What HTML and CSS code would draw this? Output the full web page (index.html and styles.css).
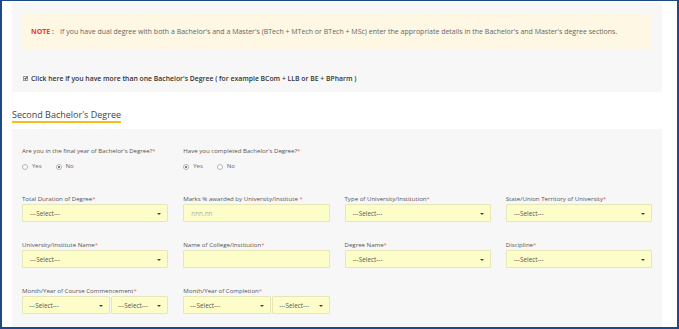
FILE: index.html
```html
<!DOCTYPE html>
<html lang="en">
<head>
    <meta charset="UTF-8">
    <title>Second Bachelor's Degree</title>
    <link rel="stylesheet" href="styles.css">
</head>
<body>
    <div class="frame">
        <div class="top-panel">
            <div class="note">
                <span class="note-tag">NOTE :</span>
                If you have dual degree with both a Bachelor's and a Master's (BTech + MTech or BTech + MSc) enter the appropriate details in the Bachelor's and Master's degree sections.
            </div>
            <label class="check-row">
                <span class="checkbox">&#10004;</span>
                Click here if you have more than one Bachelor's Degree ( for example BCom + LLB or BE + BPharm )
            </label>
        </div>

        <h2 class="section-title">Second Bachelor's Degree</h2>

        <div class="form-panel">
            <div class="form-grid radio-grid">
                <div class="field">
                    <div class="field-label">Are you in the final year of Bachelor's Degree?<span class="req">*</span></div>
                    <div class="radios">
                        <span class="radio"><span class="dot"></span>Yes</span>
                        <span class="radio"><span class="dot checked"></span>No</span>
                    </div>
                </div>
                <div class="field">
                    <div class="field-label">Have you completed Bachelor's Degree?<span class="req">*</span></div>
                    <div class="radios">
                        <span class="radio"><span class="dot checked"></span>Yes</span>
                        <span class="radio"><span class="dot"></span>No</span>
                    </div>
                </div>
            </div>

            <div class="form-grid">
                <div class="field">
                    <div class="field-label">Total Duration of Degree<span class="req">*</span></div>
                    <div class="select">---Select---</div>
                </div>
                <div class="field">
                    <div class="field-label">Marks % awarded by University/Institute <span class="req">*</span></div>
                    <div class="input placeholder">nnn.nn</div>
                </div>
                <div class="field">
                    <div class="field-label">Type of University/Institution<span class="req">*</span></div>
                    <div class="select">---Select---</div>
                </div>
                <div class="field">
                    <div class="field-label">State/Union Territory of University<span class="req">*</span></div>
                    <div class="select">---Select---</div>
                </div>

                <div class="field">
                    <div class="field-label">University/Institute Name<span class="req">*</span></div>
                    <div class="select">---Select---</div>
                </div>
                <div class="field">
                    <div class="field-label">Name of College/Institution<span class="req">*</span></div>
                    <div class="input"></div>
                </div>
                <div class="field">
                    <div class="field-label">Degree Name<span class="req">*</span></div>
                    <div class="select">---Select---</div>
                </div>
                <div class="field">
                    <div class="field-label">Discipline<span class="req">*</span></div>
                    <div class="select">---Select---</div>
                </div>

                <div class="field">
                    <div class="field-label">Month/Year of Course Commencement<span class="req">*</span></div>
                    <div class="split">
                        <div class="select">---Select---</div>
                        <div class="select">---Select---</div>
                    </div>
                </div>
                <div class="field">
                    <div class="field-label">Month/Year of Completion<span class="req">*</span></div>
                    <div class="split">
                        <div class="select">---Select---</div>
                        <div class="select">---Select---</div>
                    </div>
                </div>
            </div>
        </div>
    </div>
</body>
</html>
```

FILE: styles.css
```css
:root {
    --frame: #1d4a86;
    --panel: #f7f7f7;
    --note-bg: #fdf7e4;
    --field-bg: #fdfdc9;
    --field-border: #e6e6b8;
    --text: #555555;
    --req: #f26d4f;
    --accent: #f7bd1a;
}

* {
    margin: 0;
    padding: 0;
    box-sizing: border-box;
}

body {
    font-family: "Open Sans", "Noto Sans", sans-serif;
    background: #ffffff;
    color: var(--text);
}

.frame {
    width: 679px;
    height: 329px;
    border: 2px solid var(--frame);
    border-top-width: 1px;
    padding: 2px 15px 0 10px;
    overflow: hidden;
}

.top-panel {
    background: var(--panel);
    height: 89px;
    padding: 11px 10px 0;
}

.note {
    background: var(--note-bg);
    height: 35px;
    display: flex;
    align-items: center;
    padding-left: 9px;
    font-size: 7px;
    color: #666;
    white-space: nowrap;
}

.note-tag {
    color: #e8412c;
    font-weight: 700;
    margin-right: 6px;
}

.check-row {
    display: flex;
    align-items: center;
    gap: 3px;
    margin-top: 25px;
    padding-left: 1px;
    font-size: 6.85px;
    font-weight: 600;
    color: #333;
    white-space: nowrap;
}

.checkbox {
    width: 5px;
    height: 5px;
    border: 1px solid #999;
    background: #fff;
    font-size: 5px;
    line-height: 3px;
    color: #333;
    text-align: center;
}

.section-title {
    display: inline-block;
    margin-top: 17px;
    font-size: 9px;
    font-weight: 400;
    line-height: 12px;
    color: #444;
    border-bottom: 2px solid var(--accent);
}

.form-panel {
    background: var(--panel);
    margin-top: 6px;
    height: 210px;
    padding: 17px 10px 0;
}

.form-grid {
    display: grid;
    grid-template-columns: repeat(4, 1fr);
    column-gap: 15px;
    row-gap: 18px;
}

.radio-grid {
    margin-bottom: 23px;
}

.field-label {
    font-size: 6.1px;
    line-height: 9px;
    color: #555;
    white-space: nowrap;
    margin-bottom: 1px;
}

.req {
    color: var(--req);
}

.radios {
    display: flex;
    gap: 14px;
    margin-top: 7px;
    font-size: 6px;
    line-height: 9px;
    color: #666;
}

.radio {
    display: flex;
    align-items: center;
    gap: 4px;
}

.dot {
    width: 6px;
    height: 6px;
    border-radius: 50%;
    border: 1px solid #b5b5b5;
    background: #fff;
    display: flex;
    align-items: center;
    justify-content: center;
}

.dot.checked::after {
    content: "";
    width: 2px;
    height: 2px;
    border-radius: 50%;
    background: #555;
}

.select,
.input {
    height: 18px;
    background: var(--field-bg);
    border: 1px solid var(--field-border);
    border-radius: 1px;
    display: flex;
    align-items: center;
    padding: 0 7px;
    font-size: 6.4px;
    color: #555;
}

.select {
    position: relative;
}

.select::after {
    content: "";
    position: absolute;
    right: 6px;
    top: 8px;
    border-left: 2px solid transparent;
    border-right: 2px solid transparent;
    border-top: 2px solid #444;
}

.placeholder {
    color: #b0b0a0;
}

.split {
    display: grid;
    grid-template-columns: 88px 1fr;
    gap: 1px;
}

.split .select {
    padding-left: 6px;
}
```
